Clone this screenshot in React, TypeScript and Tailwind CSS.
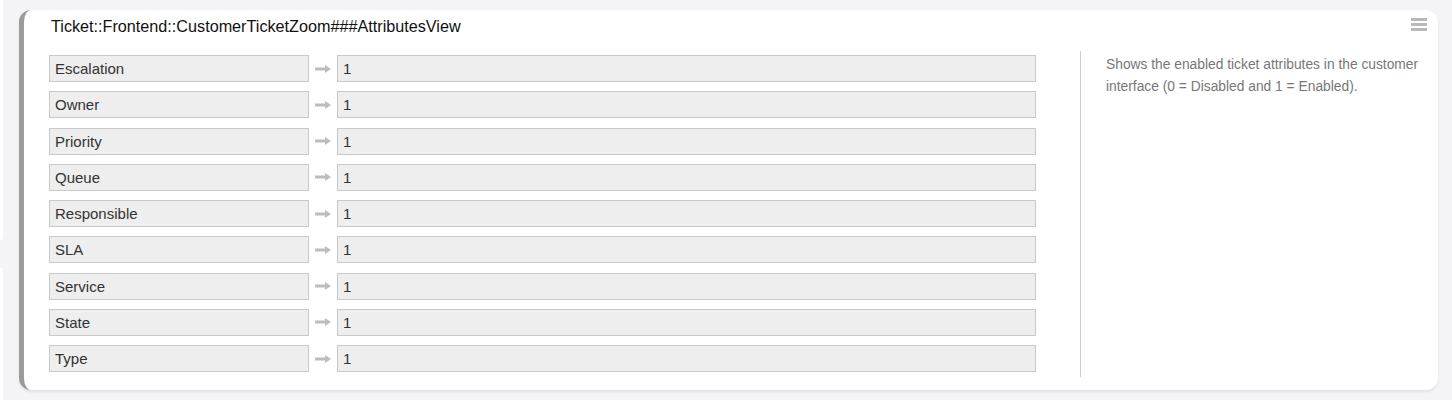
import React from 'react';

const rows = [
  { key: "Escalation", value: "1" },
  { key: "Owner", value: "1" },
  { key: "Priority", value: "1" },
  { key: "Queue", value: "1" },
  { key: "Responsible", value: "1" },
  { key: "SLA", value: "1" },
  { key: "Service", value: "1" },
  { key: "State", value: "1" },
  { key: "Type", value: "1" }
];

function Arrow() {
  return (
    <svg width="16" height="8" viewBox="0 0 16 8" className="block">
      <rect x="0" y="2.5" width="11" height="3" fill="#bdbdbd" />
      <path d="M10 0 L16 4 L10 8 Z" fill="#bdbdbd" />
    </svg>
  );
}

function HamburgerIcon() {
  return (
    <svg width="16" height="14" viewBox="0 0 16 14" className="block">
      <rect x="0" y="0" width="16" height="3" fill="#b9b9b9" />
      <rect x="0" y="5" width="16" height="3" fill="#b9b9b9" />
      <rect x="0" y="10" width="16" height="3" fill="#b9b9b9" />
    </svg>
  );
}

export default function App() {
  return (
    <div className="w-[1452px] h-[400px] bg-[#f4f4f6] flex overflow-hidden font-['Liberation_Sans',Arial,sans-serif]">
      {/* edge of the panels to the left */}
      <div className="w-[3px] flex flex-col gap-[28px] shrink-0">
        <div className="h-[240px] bg-white rounded-br-[6px]"></div>
        <div className="flex-1 bg-white rounded-tr-[6px]"></div>
      </div>

      <div className="ml-[16px] mt-[10px] w-[1419px] h-[380px] bg-white rounded-[12px] border-l-[5px] border-[#9b9b9b] shadow-[0_2px_3px_rgba(0,0,0,0.08)] pl-[25px] pr-[10px] pt-[5px] flex flex-col">
        <div className="flex items-start justify-between">
          <h2 className="ml-[2px] mt-[1px] text-[16.2px] leading-[20px] text-[#111]">
            Ticket::Frontend::CustomerTicketZoom###AttributesView
          </h2>
          <div className="mt-[3px] mr-[1px]">
            <HamburgerIcon />
          </div>
        </div>

        <div className="mt-[15px] flex">
          <div className="w-[987px] pt-[4px] pb-[5px] flex flex-col gap-[9.25px]">
            {rows.map((row, idx) => (
              <div key={idx} className="flex items-center">
                <div className="w-[260px] h-[27px] bg-[#eeeeee] border border-[#c9c9c9] px-[5px] text-[15px] leading-[25px] text-[#333]">
                  {row.key}
                </div>
                <div className="w-[28px] flex justify-center">
                  <Arrow />
                </div>
                <div className="flex-1 h-[27px] bg-[#eeeeee] border border-[#c9c9c9] px-[5px] text-[15px] leading-[25px] text-[#333]">
                  {row.value}
                </div>
              </div>
            ))}
          </div>

          <div className="ml-[44px] flex-1 border-l border-[#cccccc] pl-[25px] pt-[3px]">
            <p className="w-[320px] text-[13.8px] leading-[22px] text-[#777]">
              Shows the enabled ticket attributes in the customer interface (0 = Disabled and 1 = Enabled).
            </p>
          </div>
        </div>
      </div>
    </div>
  );
}
